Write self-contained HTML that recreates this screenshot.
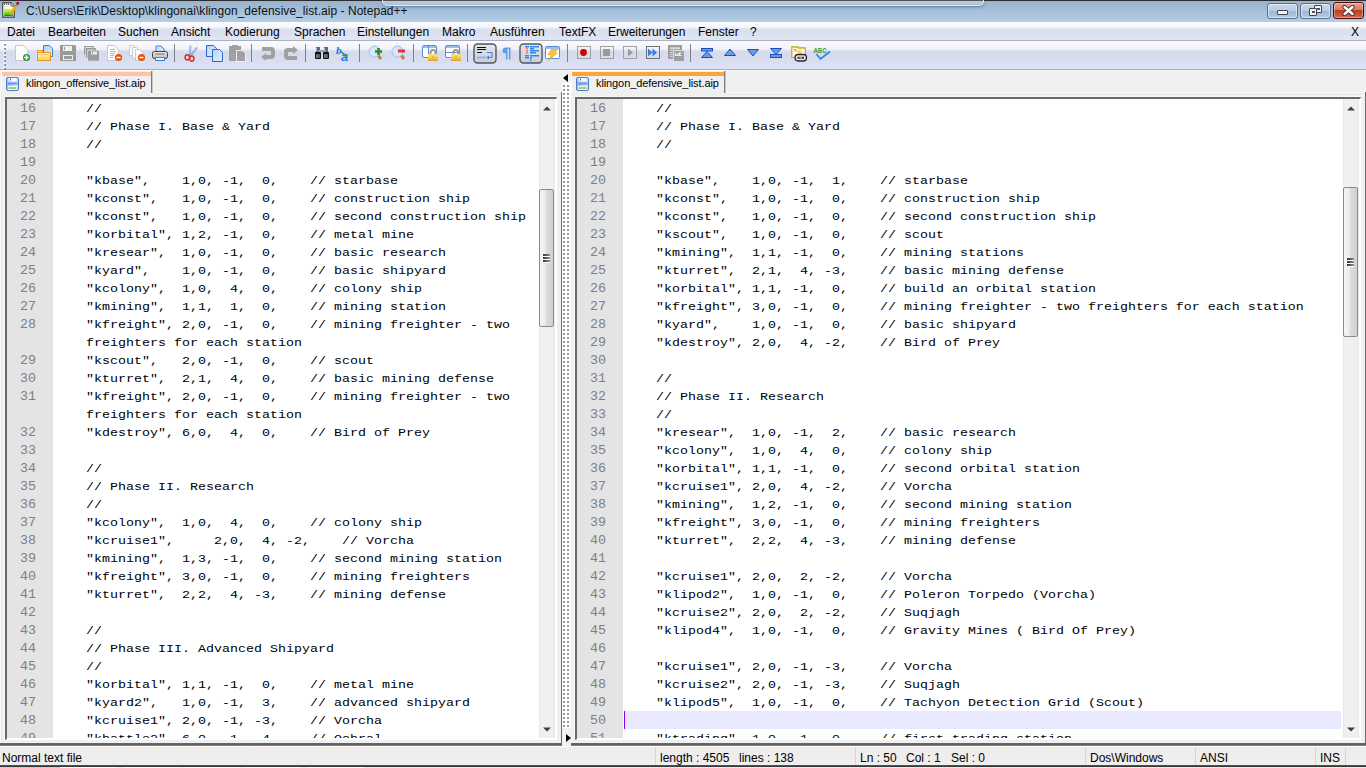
<!DOCTYPE html><html><head><meta charset="utf-8"><style>
*{margin:0;padding:0;box-sizing:border-box}
html,body{width:1366px;height:768px;overflow:hidden;background:#f0f0f0;position:relative;font-family:"Liberation Sans",sans-serif}
div,svg{position:absolute}
#title{left:0;top:0;width:1366px;height:22px;background:linear-gradient(#2c2c2c 0,#2c2c2c 1px,#98b2cf 1px,#b5cee7 22px)}
#ttext{left:26px;top:4px;font-size:12px;color:#111;white-space:nowrap;letter-spacing:0.04px}
#menu{left:0;top:22px;width:1366px;height:19px;background:linear-gradient(#fcfdfe 0,#f6f7fb 5px,#dde2f1 7px,#d9dff0 9px,#e1e6f4 100%);border-bottom:1px solid #a9afc0}
.mi{top:3px;font-size:12px;color:#000;white-space:nowrap}
#tool{left:0;top:41px;width:1366px;height:29px;background:linear-gradient(#fafbfd 0,#f1f3f9 8px,#d8ddef 10px,#d5daed 12px,#dde2f3 100%);border-bottom:1px solid #a8aebe}
.ln{width:46px;height:18px;font:13.333px/18px "Liberation Mono",monospace;color:#808080;padding-left:13px;white-space:pre;padding-top:1px;transform:scaleY(0.9);transform-origin:0 13px}
.cl{height:18px;font:13.333px/18px "Liberation Mono",monospace;color:#000;white-space:pre;padding-top:1px;transform:scaleY(0.88);transform-origin:0 13px}
.frame{border-top:2px solid #696969;border-left:2px solid #696969;border-right:1px solid #fff;border-bottom:1px solid #fff;background:#fff;box-shadow:-1px -1px 0 #f8f8f8}
.margin{background:#e4e4e4}
.sbar{background:linear-gradient(90deg,#e6e6e6 0,#f0f0f0 2px,#f0f0f0 14px,#e8e8e8 16px)}
.thumb{border:1px solid #8a8a8a;border-radius:2px;background:linear-gradient(90deg,#f4f4f4 0,#ececec 40%,#dcdcdf 50%,#cfd0d4 100%)}
.grip{width:8px;height:1px;background:#555}
#status{left:0;top:746px;width:1366px;height:19px;background:#f0eded;border-top:1px solid #fff}
.st{top:4px;font-size:12px;color:#000;white-space:nowrap}
.sep{top:1px;width:1px;height:18px;background:#d9d4d4}
.tab{font-size:11px;white-space:nowrap;letter-spacing:-0.1px}
</style></head><body>
<div id="title"></div>
<div style="left:382px;top:0;width:602px;height:6px;background:linear-gradient(#55524f 0,#55524f 1px,#b8cbe2 1px,#aec2da 5px);border:1px solid #dce7f3;border-top:none;border-radius:0 0 5px 5px;box-shadow:0 1px 3px rgba(50,70,100,.55)"></div>
<svg style="left:1px;top:1px" width="18" height="18" viewBox="0 0 18 18"><defs><linearGradient id="ag" x1="0" y1="0" x2="0" y2="1"><stop offset="0" stop-color="#e8ec60"/><stop offset=".35" stop-color="#b8e838"/><stop offset=".8" stop-color="#3cc020"/><stop offset="1" stop-color="#0a6a0a"/></linearGradient></defs><path d="M1.7 1.7H10L13.3 5V16.3H1.7Z" fill="#fff" stroke="#5a5a5a" stroke-width="1.4"/><path d="M10 1.7V5H13.3" fill="#e8e8e8" stroke="#5a5a5a" stroke-width="1"/><path d="M3.5 2.5v1.5M5.5 2.5v1.5M7.5 2.5v1.5" stroke="#5a5a5a" stroke-width="1"/><rect x="3.2" y="5.6" width="6" height=".6" fill="#c8d0d8"/><rect x="3.2" y="7.6" width="9" height="7.5" fill="url(#ag)"/><path d="M9.5 14L15 5" stroke="#f0a810" stroke-width="2.6"/><path d="M9 15L10 13.5" stroke="#806040" stroke-width="1"/><path d="M15 5L16.2 3" stroke="#5a7090" stroke-width="1"/><rect x="15.5" y="1" width="2.5" height="2.5" fill="#b00010"/></svg>
<div id="ttext">C:\Users\Erik\Desktop\klingonai\klingon_defensive_list.aip - Notepad++</div>
<div style="left:1267px;top:3px;width:31px;height:16px;border:1px solid #5d6f86;border-radius:3px;background:linear-gradient(#c8d8ea 0,#b9cce2 50%,#9fb6d0 50%,#b4cbe4 100%);box-shadow:inset 0 0 0 1px rgba(255,255,255,.5)"></div><div style="left:1277px;top:10px;width:11px;height:5px;border:1px solid #3c4552;border-radius:1px;background:#f4f4f4"></div><div style="left:1300px;top:3px;width:31px;height:16px;border:1px solid #5d6f86;border-radius:3px;background:linear-gradient(#c8d8ea 0,#b9cce2 50%,#9fb6d0 50%,#b4cbe4 100%);box-shadow:inset 0 0 0 1px rgba(255,255,255,.5)"></div><div style="left:1314px;top:5px;width:8px;height:8px;border:1px solid #3c4552;border-radius:1px;background:#f4f4f4"><div style="left:2px;top:2px;width:3px;height:2px;background:#4a5a70"></div></div><div style="left:1309px;top:8px;width:8px;height:8px;border:1px solid #3c4552;border-radius:1px;background:#f4f4f4"><div style="left:2px;top:2px;width:3px;height:2px;background:#4a5a70"></div></div><div style="left:1333px;top:2px;width:31px;height:17px;border:1px solid #4a1010;border-radius:3px;background:linear-gradient(#e8a090 0,#d87a64 45%,#c03a1c 50%,#d06a50 100%);box-shadow:inset 0 0 0 1px rgba(255,255,255,.35)"></div><svg style="left:1342px;top:5px" width="13" height="11" viewBox="0 0 13 11"><path d="M2.5 2L10.5 9M10.5 2L2.5 9" stroke="#3a2a2a" stroke-width="4.2" stroke-linecap="round"/><path d="M2.5 2L10.5 9M10.5 2L2.5 9" stroke="#fff" stroke-width="2.4" stroke-linecap="round"/></svg>
<div id="menu"><div class="mi" style="left:7px">Datei</div>
<div class="mi" style="left:48px">Bearbeiten</div>
<div class="mi" style="left:118px">Suchen</div>
<div class="mi" style="left:171px">Ansicht</div>
<div class="mi" style="left:225px">Kodierung</div>
<div class="mi" style="left:294px">Sprachen</div>
<div class="mi" style="left:357px">Einstellungen</div>
<div class="mi" style="left:442px">Makro</div>
<div class="mi" style="left:490px">Ausführen</div>
<div class="mi" style="left:559px">TextFX</div>
<div class="mi" style="left:608px">Erweiterungen</div>
<div class="mi" style="left:698px">Fenster</div>
<div class="mi" style="left:750px">?</div><div class="mi" style="left:1351px">X</div></div>
<div id="tool"></div>
<svg style="left:3px;top:43px" width="4" height="28" viewBox="0 0 4 28"><rect x="0.5" y="0" width="2" height="2" fill="#fff"/><rect x="1.5" y="1" width="1.5" height="1.5" fill="#6a707c"/><rect x="1" y="1.5" width="1" height="1" fill="#9aa0aa"/><rect x="0.5" y="4" width="2" height="2" fill="#fff"/><rect x="1.5" y="5" width="1.5" height="1.5" fill="#6a707c"/><rect x="1" y="5.5" width="1" height="1" fill="#9aa0aa"/><rect x="0.5" y="8" width="2" height="2" fill="#fff"/><rect x="1.5" y="9" width="1.5" height="1.5" fill="#6a707c"/><rect x="1" y="9.5" width="1" height="1" fill="#9aa0aa"/><rect x="0.5" y="12" width="2" height="2" fill="#fff"/><rect x="1.5" y="13" width="1.5" height="1.5" fill="#6a707c"/><rect x="1" y="13.5" width="1" height="1" fill="#9aa0aa"/><rect x="0.5" y="16" width="2" height="2" fill="#fff"/><rect x="1.5" y="17" width="1.5" height="1.5" fill="#6a707c"/><rect x="1" y="17.5" width="1" height="1" fill="#9aa0aa"/><rect x="0.5" y="20" width="2" height="2" fill="#fff"/><rect x="1.5" y="21" width="1.5" height="1.5" fill="#6a707c"/><rect x="1" y="21.5" width="1" height="1" fill="#9aa0aa"/><rect x="0.5" y="24" width="2" height="2" fill="#fff"/><rect x="1.5" y="25" width="1.5" height="1.5" fill="#6a707c"/><rect x="1" y="25.5" width="1" height="1" fill="#9aa0aa"/></svg>
<svg style="left:15px;top:45px" width="16" height="16" viewBox="0 0 16 16"><path d="M0.5 0.5H8.5L12.5 4.5V15.5H0.5Z" fill="#fdfdfd" stroke="#c9c9c9"/><circle cx="11.5" cy="12.5" r="3.5" fill="#2f8f2f"/><path d="M11.5 10.3v4.4M9.3 12.5h4.4" stroke="#fff" stroke-width="1.6"/></svg>
<svg style="left:37px;top:45px" width="17" height="17" viewBox="0 0 17 17"><defs><linearGradient id="fo" x1="0" y1="0" x2="0" y2="1"><stop offset="0" stop-color="#fdf3c8"/><stop offset="1" stop-color="#f6d455"/></linearGradient><linearGradient id="dc" x1="0" y1="0" x2="1" y2="1"><stop offset="0" stop-color="#a9cbf5"/><stop offset="1" stop-color="#eef5fe"/></linearGradient></defs><path d="M6.5 0.5H12.5L15.5 3.5V11.5H6.5Z" fill="url(#dc)" stroke="#3f7fd6"/><rect x=".5" y="5.5" width="5" height="2" fill="#fbe6a8" stroke="#e8951f"/><rect x=".5" y="7.5" width="13" height="8" fill="url(#fo)" stroke="#e8951f"/><path d="M2 9.5H12" stroke="#f0c040" stroke-width=".8"/></svg>
<svg style="left:60px;top:45px" width="16" height="16" viewBox="0 0 16 16"><path d="M0 0H15L16 1V16H0Z" fill="#9a9a9a"/><rect x="3" y="1" width="9" height="5" fill="#f0f0f0"/><rect x="4" y="2" width="1" height="3" fill="#9a9a9a"/><rect x="3" y="10" width="10" height="5" fill="#f0f0f0"/><rect x="4" y="11" width="8" height="3" fill="#9a9a9a"/></svg>
<svg style="left:84px;top:46px" width="15" height="15" viewBox="0 0 15 15"><rect x="0" y="0" width="10" height="9" fill="#9c9c9c"/><rect x="2" y="1" width="5" height="1.5" fill="#eee"/><rect x="2" y="2" width="10" height="10" fill="#9c9c9c"/><rect x="1.5" y="1.5" width="11" height="11" fill="none" stroke="#e4e7f2" stroke-width=".6"/><rect x="4" y="4" width="5" height="1.5" fill="#eee"/><rect x="4" y="4.5" width="11" height="10.5" fill="#9c9c9c"/><rect x="3.5" y="4" width="12" height="11" fill="none" stroke="#e4e7f2" stroke-width=".6"/><rect x="7" y="5.5" width="6" height="3" fill="#eee"/><rect x="8" y="6" width="1" height="2" fill="#9c9c9c"/></svg>
<svg style="left:107px;top:45px" width="16" height="17" viewBox="0 0 16 17"><path d="M0.5 0.5H7.5L11.5 4.5V15.5H0.5Z" fill="#fdfdfd" stroke="#c9c9c9"/><path d="M3 4.5h5M3 6.5h6M3 8.5h5M3 10.5h4M3 12.5h3" stroke="#9a9a9a" stroke-width=".7"/><circle cx="11.5" cy="12.5" r="3.6" fill="#e2560d"/><rect x="9.5" y="11.8" width="4" height="1.4" fill="#fff"/></svg>
<svg style="left:129px;top:45px" width="17" height="17" viewBox="0 0 17 17"><path d="M0.5 0.5H4.5L7.5 3.5V10.5H0.5Z" fill="#fdfdfd" stroke="#c9c9c9"/><path d="M3.5 2.5H7.5L10.5 5.5V13.5H3.5Z" fill="#fdfdfd" stroke="#c9c9c9"/><path d="M6.5 4.5H10.5L13.5 7.5V15.5H6.5Z" fill="#fdfdfd" stroke="#c9c9c9"/><circle cx="12.5" cy="12.5" r="3.6" fill="#e2560d"/><rect x="10.5" y="11.8" width="4" height="1.4" fill="#fff"/></svg>
<svg style="left:152px;top:45px" width="17" height="17" viewBox="0 0 17 17"><defs><linearGradient id="pr" x1="0" y1="0" x2="0" y2="1"><stop offset="0" stop-color="#f4f4f4"/><stop offset="1" stop-color="#b8b8b8"/></linearGradient></defs><path d="M4.0 1.0H9.0L12.0 4.0V8.0H4.0Z" fill="#cfe3fb" stroke="#3f7fd6"/><rect x=".5" y="6.5" width="15" height="7" rx="2" fill="url(#pr)" stroke="#3a3a3a"/><rect x="3" y="8" width="10" height="2" fill="#a8a8a8"/><rect x="3.5" y="12.5" width="9" height="3" fill="#eaf3ff" stroke="#3f7fd6"/></svg>
<svg style="left:184px;top:45px" width="15" height="17" viewBox="0 0 15 17"><path d="M6.5 0.5L6 11" stroke="#5a8ad0" stroke-width="1.6"/><path d="M6.5 0.5L6 11" stroke="#e8f0fa" stroke-width=".6"/><path d="M13 2.5L6.5 11" stroke="#5a8ad0" stroke-width="1.6"/><path d="M13 2.5L6.5 11" stroke="#e8f0fa" stroke-width=".6"/><ellipse cx="3.3" cy="12.3" rx="2.2" ry="2.6" fill="none" stroke="#d63028" stroke-width="1.5"/><ellipse cx="7.8" cy="13.6" rx="2.2" ry="2.6" fill="none" stroke="#d63028" stroke-width="1.5"/></svg>
<svg style="left:206px;top:45px" width="17" height="17" viewBox="0 0 17 17"><defs><linearGradient id="cp" x1="0" y1="0" x2="1" y2="1"><stop offset="0" stop-color="#b6d4f8"/><stop offset="1" stop-color="#e4f0fd"/></linearGradient></defs><path d="M.5 .5H7.5L10.5 3.5V11.5H.5Z" fill="url(#cp)" stroke="#2f66cc" stroke-linejoin="miter"/><path d="M6.5 4.5H13.5L16.5 7.5V16.5H6.5Z" fill="url(#cp)" stroke="#2f66cc" stroke-linejoin="miter"/></svg>
<svg style="left:229px;top:45px" width="17" height="17" viewBox="0 0 17 17"><rect x="0" y="1" width="12" height="15" fill="#a0a0a0"/><rect x="3" y="0" width="6" height="3" fill="#a0a0a0"/><path d="M7.5 5.5H13.5L16.5 8.5V16.5H7.5Z" fill="#a0a0a0" stroke="#f0f0f0"/></svg>
<svg style="left:260px;top:46px" width="16" height="16" viewBox="0 0 16 16"><path d="M2 3H11Q13 3 13 5V9Q13 11 11 11H5" fill="none" stroke="#a0a0a0" stroke-width="4"/><path d="M1 11L6 7V15Z" fill="#a0a0a0"/></svg>
<svg style="left:283px;top:46px" width="16" height="16" viewBox="0 0 16 16"><path d="M10 4H5Q3 4 3 6V10Q3 12 5 12H14" fill="none" stroke="#a0a0a0" stroke-width="4"/><path d="M15 4L10 0V8Z" fill="#a0a0a0"/></svg>
<svg style="left:315px;top:47px" width="14" height="12" viewBox="0 0 14 12"><rect x="1" y="0" width="4" height="6" fill="#5c6a7a"/><rect x="9" y="0" width="4" height="6" fill="#5c6a7a"/><rect x="3" y="3" width="8" height="2" fill="#8aa0b8"/><rect x="0" y="5" width="6" height="7" rx="1" fill="#111"/><rect x="8" y="5" width="6" height="7" rx="1" fill="#111"/><rect x="1.5" y="7" width="1" height="4" fill="#d0d8e0"/><rect x="3.5" y="7" width="1" height="4" fill="#a0a8b0"/><rect x="9.5" y="7" width="1" height="4" fill="#d0d8e0"/><rect x="11.5" y="7" width="1" height="4" fill="#a0a8b0"/><rect x="1" y="1" width="1" height="3" fill="#aab8c8"/><rect x="9" y="1" width="1" height="3" fill="#aab8c8"/></svg>
<svg style="left:336px;top:44px" width="18" height="18" viewBox="0 0 18 18"><text x="0" y="9.5" font-family="Liberation Serif" font-style="italic" font-weight="bold" font-size="11" fill="#2a6ee0">b</text><text x="5" y="16.5" font-family="Liberation Sans" font-style="italic" font-weight="bold" font-size="13" fill="#2a78e8">a</text><path d="M5 7.5L9.5 11.5" stroke="#2e9a3a" stroke-width="1.6"/><path d="M7.5 12.5L10.5 12.5L10.5 9.5Z" fill="#2e9a3a"/></svg>
<svg style="left:368px;top:45px" width="16" height="16" viewBox="0 0 16 16"><path d="M9 9L13 14" stroke="#b8864a" stroke-width="3"/><circle cx="6.5" cy="6.5" r="5.5" fill="#d8e8f8" stroke="#9ec0e8"/><path d="M10.5 3v7M7 6.5h7" stroke="#2e8a2e" stroke-width="2.6"/></svg>
<svg style="left:391px;top:45px" width="16" height="16" viewBox="0 0 16 16"><path d="M9 9L13 14" stroke="#b8864a" stroke-width="3"/><circle cx="6.5" cy="6.5" r="5.5" fill="#d8e8f8" stroke="#9ec0e8"/><rect x="7" y="4.5" width="7" height="3" fill="#e8323a"/></svg>
<svg style="left:422px;top:45px" width="17" height="17" viewBox="0 0 17 17"><defs><linearGradient id="lk" x1="0" y1="0" x2="0" y2="1"><stop offset="0" stop-color="#fbe38a"/><stop offset=".6" stop-color="#f3c650"/><stop offset="1" stop-color="#e39a28"/></linearGradient></defs><rect x=".5" y=".5" width="14" height="12" rx="1.5" fill="#fff" stroke="#5a8ad8"/><rect x="1" y="1" width="13" height="2" fill="#9cbcec"/><path d="M6.5 1V12.5" stroke="#5a8ad8"/><path d="M8.5 9V7.5Q8.5 5 11 5Q13.5 5 13.5 7.5V9" fill="none" stroke="#9a9a9a" stroke-width="2"/><rect x="6" y="9" width="10" height="7" fill="url(#lk)"/><rect x="10.5" y="11.5" width="1" height="1.2" fill="#b88a30"/></svg>
<svg style="left:445px;top:45px" width="17" height="17" viewBox="0 0 17 17"><rect x=".5" y=".5" width="14" height="12" rx="1.5" fill="#fff" stroke="#5a8ad8"/><rect x="1" y="1" width="13" height="2" fill="#9cbcec"/><path d="M1 7.5H14" stroke="#5a8ad8"/><path d="M8.5 9V7.5Q8.5 5 11 5Q13.5 5 13.5 7.5V9" fill="none" stroke="#9a9a9a" stroke-width="2"/><rect x="6" y="9" width="10" height="7" fill="url(#lk)"/><rect x="10.5" y="11.5" width="1" height="1.2" fill="#b88a30"/></svg>
<svg style="left:473px;top:43px" width="24" height="21" viewBox="0 0 24 21"><defs><linearGradient id="bg1" x1="0" y1="0" x2="0" y2="1"><stop offset="0" stop-color="#e4e6ec"/><stop offset="1" stop-color="#c9ccd6"/></linearGradient></defs><rect x="1" y="1" width="22" height="19" rx="3.5" fill="url(#bg1)" stroke="#54575c" stroke-width="1.4"/><path d="M4 4.5h9M4 6.5h9M4 9.5h5" stroke="#111" stroke-width="1"/><path d="M14 9.5h5V14.5h-3" fill="none" stroke="#3b82e0" stroke-width="1"/><path d="M16 12.5L13.5 14.5L16 16.5Z" fill="#3b82e0"/><rect x="4" y="13.5" width="9" height="2" fill="#8ab8f0"/></svg>
<svg style="left:502px;top:47px" width="9" height="13" viewBox="0 0 9 13"><path d="M4 0.5H8.5V12.5H7V2H5.5V12.5H4V6.5Q0.5 6.5 0.5 3.5Q0.5 0.5 4 0.5Z" fill="#5aa0ec"/></svg>
<svg style="left:519px;top:43px" width="24" height="21" viewBox="0 0 24 21"><rect x="1" y="1" width="22" height="19" rx="3.5" fill="url(#bg1)" stroke="#54575c" stroke-width="1.4"/><path d="M6 3.8h4M11 3.8h9M11 5.8h4M11 7.8h9M11 9.8h6M6 12.8h4M11 12.8h9M6 14.8h4M11 14.8h2" stroke="#2a8af0" stroke-width="1.5"/><path d="M8 5.3v1M8 7.3v1M8 9.3v1" stroke="#e00" stroke-width="1.2"/><rect x="11" y="16.5" width="1.5" height="1.5" fill="#2a8af0"/></svg>
<svg style="left:545px;top:46px" width="16" height="15" viewBox="0 0 16 15"><rect x=".5" y=".5" width="14" height="12" rx="1" fill="#fff" stroke="#5a8ad0"/><rect x="1" y="1" width="13" height="2" fill="#9dbdea"/><path d="M6 3.5L13 3.5L9.5 7L12.5 7L3.5 14.5L6.5 9L3 9Z" fill="#f2c440" stroke="#e0a020" stroke-width=".5"/></svg>
<svg style="left:577px;top:46px" width="14" height="13" viewBox="0 0 14 13"><rect x=".5" y=".5" width="13" height="12" fill="none" stroke="#a0a0a0"/><circle cx="6.5" cy="6.5" r="3.4" fill="#d00000"/></svg>
<svg style="left:600px;top:46px" width="14" height="13" viewBox="0 0 14 13"><rect x=".5" y=".5" width="13" height="12" fill="none" stroke="#a0a0a0"/><rect x="3" y="3" width="7" height="7" fill="#9a9a9a"/></svg>
<svg style="left:623px;top:46px" width="14" height="13" viewBox="0 0 14 13"><rect x=".5" y=".5" width="13" height="12" fill="none" stroke="#a0a0a0"/><path d="M5 2.5L10 6.5L5 10.5Z" fill="#9a9a9a"/></svg>
<svg style="left:646px;top:46px" width="14" height="13" viewBox="0 0 14 13"><rect x=".5" y=".5" width="13" height="12" fill="none" stroke="#707070"/><path d="M2 2.5L6.5 6.5L2 10.5ZM6.5 2.5L11 6.5L6.5 10.5Z" fill="#3d7de0"/></svg>
<svg style="left:668px;top:45px" width="17" height="17" viewBox="0 0 17 17"><rect x="0" y="0" width="14" height="14" fill="#9e9e9e"/><rect x="2" y="2.5" width="10" height="1.2" fill="#f4f4f4"/><rect x="2.5" y="4.8" width="1.2" height="1.2" fill="#eee"/><rect x="4.5" y="4.8" width="3" height="1.2" fill="#eee"/><rect x="8.5" y="4.8" width="3" height="1.2" fill="#eee"/><rect x="2.5" y="7" width="1.2" height="1.2" fill="#eee"/><rect x="4.5" y="7" width="1.2" height="1.2" fill="#eee"/><rect x="2.5" y="9" width="1.2" height="1.2" fill="#eee"/><rect x="4.5" y="9" width="1.2" height="1.2" fill="#eee"/><rect x="2.5" y="11" width="1.2" height="1.2" fill="#eee"/><rect x="4.5" y="11" width="1.2" height="1.2" fill="#eee"/><rect x="5.5" y="5.5" width="11" height="11" fill="#9e9e9e" stroke="#e4e7f2" stroke-width=".8"/><path d="M7.5 8V10.5H10V8M13.5 8H11.5V10.5H13.5" fill="none" stroke="#f4f4f4" stroke-width="1.2"/></svg>
<svg style="left:700px;top:47px" width="14" height="12" viewBox="0 0 14 12"><rect x="1.5" y="1.5" width="11" height="2.5" fill="#6a9ce6" stroke="#1a4fc4"/><path d="M1.5 10.5L7 4.5L12.5 10.5Z" fill="#6a9ce6" stroke="#1a4fc4" stroke-linejoin="round"/></svg>
<svg style="left:723px;top:48px" width="14" height="9" viewBox="0 0 14 9"><path d="M1.5 7.5L7 1L12.5 7.5Z" fill="#6a9ce6" stroke="#1a4fc4" stroke-linejoin="round"/></svg>
<svg style="left:746px;top:48px" width="14" height="9" viewBox="0 0 14 9"><path d="M1.5 1.5L7 8L12.5 1.5Z" fill="#6a9ce6" stroke="#1a4fc4" stroke-linejoin="round"/></svg>
<svg style="left:769px;top:47px" width="14" height="12" viewBox="0 0 14 12"><path d="M1.5 1.5L7 7.5L12.5 1.5Z" fill="#6a9ce6" stroke="#1a4fc4" stroke-linejoin="round"/><rect x="1.5" y="7.5" width="11" height="3" fill="#6a9ce6" stroke="#1a4fc4"/></svg>
<svg style="left:791px;top:46px" width="17" height="16" viewBox="0 0 17 16"><path d="M.8 .8H6.5L7.5 1.8H14.3V11.5H.8Z" fill="#fffbe8" stroke="#d8a020" stroke-width="1.2"/><path d="M.8 .8H6.5L7.5 1.8H14.3" fill="none" stroke="#b8c828" stroke-width="1.2"/><path d="M2.5 3.5h3M2.5 5h8M7 7h4" stroke="#f4a830" stroke-width="1"/><rect x="4" y="8.5" width="11.5" height="6.5" rx="3" fill="#e8e8e8" stroke="#2a2a2a" stroke-width="1.3"/><rect x="6.5" y="10.8" width="6.5" height="2" fill="#333"/><rect x="8.5" y="11.3" width="2.5" height="1" fill="#ddd"/></svg>
<svg style="left:813px;top:46px" width="18" height="15" viewBox="0 0 18 15"><text x="0.5" y="6.5" font-family="Liberation Sans" font-weight="bold" font-size="6.5" fill="#3a9a40" textLength="13" lengthAdjust="spacingAndGlyphs">ABC</text><path d="M3.5 8L7.5 13L17 5.5" fill="none" stroke="#2a8ae8" stroke-width="1.8"/></svg>
<div style="left:174px;top:44px;width:1px;height:18px;background:#7a7f8c"></div>
<div style="left:251px;top:44px;width:1px;height:18px;background:#7a7f8c"></div>
<div style="left:305px;top:44px;width:1px;height:18px;background:#7a7f8c"></div>
<div style="left:359px;top:44px;width:1px;height:18px;background:#7a7f8c"></div>
<div style="left:413px;top:44px;width:1px;height:18px;background:#7a7f8c"></div>
<div style="left:467px;top:44px;width:1px;height:18px;background:#7a7f8c"></div>
<div style="left:567px;top:44px;width:1px;height:18px;background:#7a7f8c"></div>
<div style="left:690px;top:44px;width:1px;height:18px;background:#7a7f8c"></div>
<div style="left:0;top:70px;width:1366px;height:1px;background:#f5f5f3"></div>
<div style="left:1px;top:70px;width:151px;height:23px;background:#f0f0f0;border-top:1px solid #fff;border-left:1px solid #fff"></div><div style="left:2px;top:72px;width:149px;height:4px;background:#fdc4a4"></div><div style="left:151px;top:71px;width:2px;height:22px;background:linear-gradient(90deg,#7c7c7c 0,#7c7c7c 1px,#c8c8c8 1px)"></div><svg style="left:6px;top:77px" width="13" height="14" viewBox="0 0 13 14"><defs><linearGradient id="fg" x1="0" y1="0" x2="1" y2="0"><stop offset="0" stop-color="#9cc0ee"/><stop offset="1" stop-color="#cfe0f8"/></linearGradient></defs><rect x=".5" y=".5" width="12" height="13" rx="1.5" fill="url(#fg)" stroke="#4a7ccc"/><rect x="2.5" y="1" width="8" height="3.5" fill="#f8fbff"/><rect x="4" y="1.5" width="1" height="2" fill="#3060b0"/><rect x="1.5" y="5.5" width="10" height="2" fill="#6a9ae0"/><rect x="2" y="9" width="9" height="4" fill="#f4f8fc"/><rect x="2.5" y="10" width="8" height="2" fill="#9ad078"/></svg><div class="tab" style="left:26px;top:77px">klingon_offensive_list.aip</div><div style="left:571px;top:70px;width:154px;height:23px;background:#f0f0f0;border-top:1px solid #fff;border-left:1px solid #fff"></div><div style="left:572px;top:72px;width:152px;height:4px;background:#faa53a"></div><div style="left:724px;top:71px;width:2px;height:22px;background:linear-gradient(90deg,#7c7c7c 0,#7c7c7c 1px,#c8c8c8 1px)"></div><svg style="left:576px;top:77px" width="13" height="14" viewBox="0 0 13 14"><defs><linearGradient id="fg" x1="0" y1="0" x2="1" y2="0"><stop offset="0" stop-color="#9cc0ee"/><stop offset="1" stop-color="#cfe0f8"/></linearGradient></defs><rect x=".5" y=".5" width="12" height="13" rx="1.5" fill="url(#fg)" stroke="#4a7ccc"/><rect x="2.5" y="1" width="8" height="3.5" fill="#f8fbff"/><rect x="4" y="1.5" width="1" height="2" fill="#3060b0"/><rect x="1.5" y="5.5" width="10" height="2" fill="#6a9ae0"/><rect x="2" y="9" width="9" height="4" fill="#f4f8fc"/><rect x="2.5" y="10" width="8" height="2" fill="#9ad078"/></svg><div class="tab" style="left:596px;top:77px">klingon_defensive_list.aip</div>
<div style="left:557px;top:92px;width:4px;height:653px;background:#f0f0f0"></div><div style="left:561px;top:92px;width:1px;height:653px;background:#6a6a6a"></div><div style="left:562px;top:83px;width:9px;height:645px;background:#fff"></div><div style="left:563px;top:85px;width:2px;height:2px;background:#999"></div><div style="left:567px;top:85px;width:2px;height:2px;background:#999"></div><div style="left:563px;top:89px;width:2px;height:2px;background:#999"></div><div style="left:567px;top:89px;width:2px;height:2px;background:#999"></div><div style="left:563px;top:93px;width:2px;height:2px;background:#999"></div><div style="left:567px;top:93px;width:2px;height:2px;background:#999"></div><div style="left:563px;top:97px;width:2px;height:2px;background:#999"></div><div style="left:567px;top:97px;width:2px;height:2px;background:#999"></div><div style="left:563px;top:101px;width:2px;height:2px;background:#999"></div><div style="left:567px;top:101px;width:2px;height:2px;background:#999"></div><div style="left:563px;top:105px;width:2px;height:2px;background:#999"></div><div style="left:567px;top:105px;width:2px;height:2px;background:#999"></div><div style="left:563px;top:109px;width:2px;height:2px;background:#999"></div><div style="left:567px;top:109px;width:2px;height:2px;background:#999"></div><div style="left:563px;top:113px;width:2px;height:2px;background:#999"></div><div style="left:567px;top:113px;width:2px;height:2px;background:#999"></div><div style="left:563px;top:117px;width:2px;height:2px;background:#999"></div><div style="left:567px;top:117px;width:2px;height:2px;background:#999"></div><div style="left:563px;top:121px;width:2px;height:2px;background:#999"></div><div style="left:567px;top:121px;width:2px;height:2px;background:#999"></div><div style="left:563px;top:125px;width:2px;height:2px;background:#999"></div><div style="left:567px;top:125px;width:2px;height:2px;background:#999"></div><div style="left:563px;top:129px;width:2px;height:2px;background:#999"></div><div style="left:567px;top:129px;width:2px;height:2px;background:#999"></div><div style="left:563px;top:133px;width:2px;height:2px;background:#999"></div><div style="left:567px;top:133px;width:2px;height:2px;background:#999"></div><div style="left:563px;top:137px;width:2px;height:2px;background:#999"></div><div style="left:567px;top:137px;width:2px;height:2px;background:#999"></div><div style="left:563px;top:141px;width:2px;height:2px;background:#999"></div><div style="left:567px;top:141px;width:2px;height:2px;background:#999"></div><div style="left:563px;top:145px;width:2px;height:2px;background:#999"></div><div style="left:567px;top:145px;width:2px;height:2px;background:#999"></div><div style="left:563px;top:149px;width:2px;height:2px;background:#999"></div><div style="left:567px;top:149px;width:2px;height:2px;background:#999"></div><div style="left:563px;top:153px;width:2px;height:2px;background:#999"></div><div style="left:567px;top:153px;width:2px;height:2px;background:#999"></div><div style="left:563px;top:157px;width:2px;height:2px;background:#999"></div><div style="left:567px;top:157px;width:2px;height:2px;background:#999"></div><div style="left:563px;top:161px;width:2px;height:2px;background:#999"></div><div style="left:567px;top:161px;width:2px;height:2px;background:#999"></div><div style="left:563px;top:165px;width:2px;height:2px;background:#999"></div><div style="left:567px;top:165px;width:2px;height:2px;background:#999"></div><div style="left:563px;top:169px;width:2px;height:2px;background:#999"></div><div style="left:567px;top:169px;width:2px;height:2px;background:#999"></div><div style="left:563px;top:173px;width:2px;height:2px;background:#999"></div><div style="left:567px;top:173px;width:2px;height:2px;background:#999"></div><div style="left:563px;top:177px;width:2px;height:2px;background:#999"></div><div style="left:567px;top:177px;width:2px;height:2px;background:#999"></div><div style="left:563px;top:181px;width:2px;height:2px;background:#999"></div><div style="left:567px;top:181px;width:2px;height:2px;background:#999"></div><div style="left:563px;top:185px;width:2px;height:2px;background:#999"></div><div style="left:567px;top:185px;width:2px;height:2px;background:#999"></div><div style="left:563px;top:189px;width:2px;height:2px;background:#999"></div><div style="left:567px;top:189px;width:2px;height:2px;background:#999"></div><div style="left:563px;top:193px;width:2px;height:2px;background:#999"></div><div style="left:567px;top:193px;width:2px;height:2px;background:#999"></div><div style="left:563px;top:197px;width:2px;height:2px;background:#999"></div><div style="left:567px;top:197px;width:2px;height:2px;background:#999"></div><div style="left:563px;top:201px;width:2px;height:2px;background:#999"></div><div style="left:567px;top:201px;width:2px;height:2px;background:#999"></div><div style="left:563px;top:205px;width:2px;height:2px;background:#999"></div><div style="left:567px;top:205px;width:2px;height:2px;background:#999"></div><div style="left:563px;top:209px;width:2px;height:2px;background:#999"></div><div style="left:567px;top:209px;width:2px;height:2px;background:#999"></div><div style="left:563px;top:213px;width:2px;height:2px;background:#999"></div><div style="left:567px;top:213px;width:2px;height:2px;background:#999"></div><div style="left:563px;top:217px;width:2px;height:2px;background:#999"></div><div style="left:567px;top:217px;width:2px;height:2px;background:#999"></div><div style="left:563px;top:221px;width:2px;height:2px;background:#999"></div><div style="left:567px;top:221px;width:2px;height:2px;background:#999"></div><div style="left:563px;top:225px;width:2px;height:2px;background:#999"></div><div style="left:567px;top:225px;width:2px;height:2px;background:#999"></div><div style="left:563px;top:229px;width:2px;height:2px;background:#999"></div><div style="left:567px;top:229px;width:2px;height:2px;background:#999"></div><div style="left:563px;top:233px;width:2px;height:2px;background:#999"></div><div style="left:567px;top:233px;width:2px;height:2px;background:#999"></div><div style="left:563px;top:237px;width:2px;height:2px;background:#999"></div><div style="left:567px;top:237px;width:2px;height:2px;background:#999"></div><div style="left:563px;top:241px;width:2px;height:2px;background:#999"></div><div style="left:567px;top:241px;width:2px;height:2px;background:#999"></div><div style="left:563px;top:245px;width:2px;height:2px;background:#999"></div><div style="left:567px;top:245px;width:2px;height:2px;background:#999"></div><div style="left:563px;top:249px;width:2px;height:2px;background:#999"></div><div style="left:567px;top:249px;width:2px;height:2px;background:#999"></div><div style="left:563px;top:253px;width:2px;height:2px;background:#999"></div><div style="left:567px;top:253px;width:2px;height:2px;background:#999"></div><div style="left:563px;top:257px;width:2px;height:2px;background:#999"></div><div style="left:567px;top:257px;width:2px;height:2px;background:#999"></div><div style="left:563px;top:261px;width:2px;height:2px;background:#999"></div><div style="left:567px;top:261px;width:2px;height:2px;background:#999"></div><div style="left:563px;top:265px;width:2px;height:2px;background:#999"></div><div style="left:567px;top:265px;width:2px;height:2px;background:#999"></div><div style="left:563px;top:269px;width:2px;height:2px;background:#999"></div><div style="left:567px;top:269px;width:2px;height:2px;background:#999"></div><div style="left:563px;top:273px;width:2px;height:2px;background:#999"></div><div style="left:567px;top:273px;width:2px;height:2px;background:#999"></div><div style="left:563px;top:277px;width:2px;height:2px;background:#999"></div><div style="left:567px;top:277px;width:2px;height:2px;background:#999"></div><div style="left:563px;top:281px;width:2px;height:2px;background:#999"></div><div style="left:567px;top:281px;width:2px;height:2px;background:#999"></div><div style="left:563px;top:285px;width:2px;height:2px;background:#999"></div><div style="left:567px;top:285px;width:2px;height:2px;background:#999"></div><div style="left:563px;top:289px;width:2px;height:2px;background:#999"></div><div style="left:567px;top:289px;width:2px;height:2px;background:#999"></div><div style="left:563px;top:293px;width:2px;height:2px;background:#999"></div><div style="left:567px;top:293px;width:2px;height:2px;background:#999"></div><div style="left:563px;top:297px;width:2px;height:2px;background:#999"></div><div style="left:567px;top:297px;width:2px;height:2px;background:#999"></div><div style="left:563px;top:301px;width:2px;height:2px;background:#999"></div><div style="left:567px;top:301px;width:2px;height:2px;background:#999"></div><div style="left:563px;top:305px;width:2px;height:2px;background:#999"></div><div style="left:567px;top:305px;width:2px;height:2px;background:#999"></div><div style="left:563px;top:309px;width:2px;height:2px;background:#999"></div><div style="left:567px;top:309px;width:2px;height:2px;background:#999"></div><div style="left:563px;top:313px;width:2px;height:2px;background:#999"></div><div style="left:567px;top:313px;width:2px;height:2px;background:#999"></div><div style="left:563px;top:317px;width:2px;height:2px;background:#999"></div><div style="left:567px;top:317px;width:2px;height:2px;background:#999"></div><div style="left:563px;top:321px;width:2px;height:2px;background:#999"></div><div style="left:567px;top:321px;width:2px;height:2px;background:#999"></div><div style="left:563px;top:325px;width:2px;height:2px;background:#999"></div><div style="left:567px;top:325px;width:2px;height:2px;background:#999"></div><div style="left:563px;top:329px;width:2px;height:2px;background:#999"></div><div style="left:567px;top:329px;width:2px;height:2px;background:#999"></div><div style="left:563px;top:333px;width:2px;height:2px;background:#999"></div><div style="left:567px;top:333px;width:2px;height:2px;background:#999"></div><div style="left:563px;top:337px;width:2px;height:2px;background:#999"></div><div style="left:567px;top:337px;width:2px;height:2px;background:#999"></div><div style="left:563px;top:341px;width:2px;height:2px;background:#999"></div><div style="left:567px;top:341px;width:2px;height:2px;background:#999"></div><div style="left:563px;top:345px;width:2px;height:2px;background:#999"></div><div style="left:567px;top:345px;width:2px;height:2px;background:#999"></div><div style="left:563px;top:349px;width:2px;height:2px;background:#999"></div><div style="left:567px;top:349px;width:2px;height:2px;background:#999"></div><div style="left:563px;top:353px;width:2px;height:2px;background:#999"></div><div style="left:567px;top:353px;width:2px;height:2px;background:#999"></div><div style="left:563px;top:357px;width:2px;height:2px;background:#999"></div><div style="left:567px;top:357px;width:2px;height:2px;background:#999"></div><div style="left:563px;top:361px;width:2px;height:2px;background:#999"></div><div style="left:567px;top:361px;width:2px;height:2px;background:#999"></div><div style="left:563px;top:365px;width:2px;height:2px;background:#999"></div><div style="left:567px;top:365px;width:2px;height:2px;background:#999"></div><div style="left:563px;top:369px;width:2px;height:2px;background:#999"></div><div style="left:567px;top:369px;width:2px;height:2px;background:#999"></div><div style="left:563px;top:373px;width:2px;height:2px;background:#999"></div><div style="left:567px;top:373px;width:2px;height:2px;background:#999"></div><div style="left:563px;top:377px;width:2px;height:2px;background:#999"></div><div style="left:567px;top:377px;width:2px;height:2px;background:#999"></div><div style="left:563px;top:381px;width:2px;height:2px;background:#999"></div><div style="left:567px;top:381px;width:2px;height:2px;background:#999"></div><div style="left:563px;top:385px;width:2px;height:2px;background:#999"></div><div style="left:567px;top:385px;width:2px;height:2px;background:#999"></div><div style="left:563px;top:389px;width:2px;height:2px;background:#999"></div><div style="left:567px;top:389px;width:2px;height:2px;background:#999"></div><div style="left:563px;top:393px;width:2px;height:2px;background:#999"></div><div style="left:567px;top:393px;width:2px;height:2px;background:#999"></div><div style="left:563px;top:397px;width:2px;height:2px;background:#999"></div><div style="left:567px;top:397px;width:2px;height:2px;background:#999"></div><div style="left:563px;top:401px;width:2px;height:2px;background:#999"></div><div style="left:567px;top:401px;width:2px;height:2px;background:#999"></div><div style="left:563px;top:405px;width:2px;height:2px;background:#999"></div><div style="left:567px;top:405px;width:2px;height:2px;background:#999"></div><div style="left:563px;top:409px;width:2px;height:2px;background:#999"></div><div style="left:567px;top:409px;width:2px;height:2px;background:#999"></div><div style="left:563px;top:413px;width:2px;height:2px;background:#999"></div><div style="left:567px;top:413px;width:2px;height:2px;background:#999"></div><div style="left:563px;top:417px;width:2px;height:2px;background:#999"></div><div style="left:567px;top:417px;width:2px;height:2px;background:#999"></div><div style="left:563px;top:421px;width:2px;height:2px;background:#999"></div><div style="left:567px;top:421px;width:2px;height:2px;background:#999"></div><div style="left:563px;top:425px;width:2px;height:2px;background:#999"></div><div style="left:567px;top:425px;width:2px;height:2px;background:#999"></div><div style="left:563px;top:429px;width:2px;height:2px;background:#999"></div><div style="left:567px;top:429px;width:2px;height:2px;background:#999"></div><div style="left:563px;top:433px;width:2px;height:2px;background:#999"></div><div style="left:567px;top:433px;width:2px;height:2px;background:#999"></div><div style="left:563px;top:437px;width:2px;height:2px;background:#999"></div><div style="left:567px;top:437px;width:2px;height:2px;background:#999"></div><div style="left:563px;top:441px;width:2px;height:2px;background:#999"></div><div style="left:567px;top:441px;width:2px;height:2px;background:#999"></div><div style="left:563px;top:445px;width:2px;height:2px;background:#999"></div><div style="left:567px;top:445px;width:2px;height:2px;background:#999"></div><div style="left:563px;top:449px;width:2px;height:2px;background:#999"></div><div style="left:567px;top:449px;width:2px;height:2px;background:#999"></div><div style="left:563px;top:453px;width:2px;height:2px;background:#999"></div><div style="left:567px;top:453px;width:2px;height:2px;background:#999"></div><div style="left:563px;top:457px;width:2px;height:2px;background:#999"></div><div style="left:567px;top:457px;width:2px;height:2px;background:#999"></div><div style="left:563px;top:461px;width:2px;height:2px;background:#999"></div><div style="left:567px;top:461px;width:2px;height:2px;background:#999"></div><div style="left:563px;top:465px;width:2px;height:2px;background:#999"></div><div style="left:567px;top:465px;width:2px;height:2px;background:#999"></div><div style="left:563px;top:469px;width:2px;height:2px;background:#999"></div><div style="left:567px;top:469px;width:2px;height:2px;background:#999"></div><div style="left:563px;top:473px;width:2px;height:2px;background:#999"></div><div style="left:567px;top:473px;width:2px;height:2px;background:#999"></div><div style="left:563px;top:477px;width:2px;height:2px;background:#999"></div><div style="left:567px;top:477px;width:2px;height:2px;background:#999"></div><div style="left:563px;top:481px;width:2px;height:2px;background:#999"></div><div style="left:567px;top:481px;width:2px;height:2px;background:#999"></div><div style="left:563px;top:485px;width:2px;height:2px;background:#999"></div><div style="left:567px;top:485px;width:2px;height:2px;background:#999"></div><div style="left:563px;top:489px;width:2px;height:2px;background:#999"></div><div style="left:567px;top:489px;width:2px;height:2px;background:#999"></div><div style="left:563px;top:493px;width:2px;height:2px;background:#999"></div><div style="left:567px;top:493px;width:2px;height:2px;background:#999"></div><div style="left:563px;top:497px;width:2px;height:2px;background:#999"></div><div style="left:567px;top:497px;width:2px;height:2px;background:#999"></div><div style="left:563px;top:501px;width:2px;height:2px;background:#999"></div><div style="left:567px;top:501px;width:2px;height:2px;background:#999"></div><div style="left:563px;top:505px;width:2px;height:2px;background:#999"></div><div style="left:567px;top:505px;width:2px;height:2px;background:#999"></div><div style="left:563px;top:509px;width:2px;height:2px;background:#999"></div><div style="left:567px;top:509px;width:2px;height:2px;background:#999"></div><div style="left:563px;top:513px;width:2px;height:2px;background:#999"></div><div style="left:567px;top:513px;width:2px;height:2px;background:#999"></div><div style="left:563px;top:517px;width:2px;height:2px;background:#999"></div><div style="left:567px;top:517px;width:2px;height:2px;background:#999"></div><div style="left:563px;top:521px;width:2px;height:2px;background:#999"></div><div style="left:567px;top:521px;width:2px;height:2px;background:#999"></div><div style="left:563px;top:525px;width:2px;height:2px;background:#999"></div><div style="left:567px;top:525px;width:2px;height:2px;background:#999"></div><div style="left:563px;top:529px;width:2px;height:2px;background:#999"></div><div style="left:567px;top:529px;width:2px;height:2px;background:#999"></div><div style="left:563px;top:533px;width:2px;height:2px;background:#999"></div><div style="left:567px;top:533px;width:2px;height:2px;background:#999"></div><div style="left:563px;top:537px;width:2px;height:2px;background:#999"></div><div style="left:567px;top:537px;width:2px;height:2px;background:#999"></div><div style="left:563px;top:541px;width:2px;height:2px;background:#999"></div><div style="left:567px;top:541px;width:2px;height:2px;background:#999"></div><div style="left:563px;top:545px;width:2px;height:2px;background:#999"></div><div style="left:567px;top:545px;width:2px;height:2px;background:#999"></div><div style="left:563px;top:549px;width:2px;height:2px;background:#999"></div><div style="left:567px;top:549px;width:2px;height:2px;background:#999"></div><div style="left:563px;top:553px;width:2px;height:2px;background:#999"></div><div style="left:567px;top:553px;width:2px;height:2px;background:#999"></div><div style="left:563px;top:557px;width:2px;height:2px;background:#999"></div><div style="left:567px;top:557px;width:2px;height:2px;background:#999"></div><div style="left:563px;top:561px;width:2px;height:2px;background:#999"></div><div style="left:567px;top:561px;width:2px;height:2px;background:#999"></div><div style="left:563px;top:565px;width:2px;height:2px;background:#999"></div><div style="left:567px;top:565px;width:2px;height:2px;background:#999"></div><div style="left:563px;top:569px;width:2px;height:2px;background:#999"></div><div style="left:567px;top:569px;width:2px;height:2px;background:#999"></div><div style="left:563px;top:573px;width:2px;height:2px;background:#999"></div><div style="left:567px;top:573px;width:2px;height:2px;background:#999"></div><div style="left:563px;top:577px;width:2px;height:2px;background:#999"></div><div style="left:567px;top:577px;width:2px;height:2px;background:#999"></div><div style="left:563px;top:581px;width:2px;height:2px;background:#999"></div><div style="left:567px;top:581px;width:2px;height:2px;background:#999"></div><div style="left:563px;top:585px;width:2px;height:2px;background:#999"></div><div style="left:567px;top:585px;width:2px;height:2px;background:#999"></div><div style="left:563px;top:589px;width:2px;height:2px;background:#999"></div><div style="left:567px;top:589px;width:2px;height:2px;background:#999"></div><div style="left:563px;top:593px;width:2px;height:2px;background:#999"></div><div style="left:567px;top:593px;width:2px;height:2px;background:#999"></div><div style="left:563px;top:597px;width:2px;height:2px;background:#999"></div><div style="left:567px;top:597px;width:2px;height:2px;background:#999"></div><div style="left:563px;top:601px;width:2px;height:2px;background:#999"></div><div style="left:567px;top:601px;width:2px;height:2px;background:#999"></div><div style="left:563px;top:605px;width:2px;height:2px;background:#999"></div><div style="left:567px;top:605px;width:2px;height:2px;background:#999"></div><div style="left:563px;top:609px;width:2px;height:2px;background:#999"></div><div style="left:567px;top:609px;width:2px;height:2px;background:#999"></div><div style="left:563px;top:613px;width:2px;height:2px;background:#999"></div><div style="left:567px;top:613px;width:2px;height:2px;background:#999"></div><div style="left:563px;top:617px;width:2px;height:2px;background:#999"></div><div style="left:567px;top:617px;width:2px;height:2px;background:#999"></div><div style="left:563px;top:621px;width:2px;height:2px;background:#999"></div><div style="left:567px;top:621px;width:2px;height:2px;background:#999"></div><div style="left:563px;top:625px;width:2px;height:2px;background:#999"></div><div style="left:567px;top:625px;width:2px;height:2px;background:#999"></div><div style="left:563px;top:629px;width:2px;height:2px;background:#999"></div><div style="left:567px;top:629px;width:2px;height:2px;background:#999"></div><div style="left:563px;top:633px;width:2px;height:2px;background:#999"></div><div style="left:567px;top:633px;width:2px;height:2px;background:#999"></div><div style="left:563px;top:637px;width:2px;height:2px;background:#999"></div><div style="left:567px;top:637px;width:2px;height:2px;background:#999"></div><div style="left:563px;top:641px;width:2px;height:2px;background:#999"></div><div style="left:567px;top:641px;width:2px;height:2px;background:#999"></div><div style="left:563px;top:645px;width:2px;height:2px;background:#999"></div><div style="left:567px;top:645px;width:2px;height:2px;background:#999"></div><div style="left:563px;top:649px;width:2px;height:2px;background:#999"></div><div style="left:567px;top:649px;width:2px;height:2px;background:#999"></div><div style="left:563px;top:653px;width:2px;height:2px;background:#999"></div><div style="left:567px;top:653px;width:2px;height:2px;background:#999"></div><div style="left:563px;top:657px;width:2px;height:2px;background:#999"></div><div style="left:567px;top:657px;width:2px;height:2px;background:#999"></div><div style="left:563px;top:661px;width:2px;height:2px;background:#999"></div><div style="left:567px;top:661px;width:2px;height:2px;background:#999"></div><div style="left:563px;top:665px;width:2px;height:2px;background:#999"></div><div style="left:567px;top:665px;width:2px;height:2px;background:#999"></div><div style="left:563px;top:669px;width:2px;height:2px;background:#999"></div><div style="left:567px;top:669px;width:2px;height:2px;background:#999"></div><div style="left:563px;top:673px;width:2px;height:2px;background:#999"></div><div style="left:567px;top:673px;width:2px;height:2px;background:#999"></div><div style="left:563px;top:677px;width:2px;height:2px;background:#999"></div><div style="left:567px;top:677px;width:2px;height:2px;background:#999"></div><div style="left:563px;top:681px;width:2px;height:2px;background:#999"></div><div style="left:567px;top:681px;width:2px;height:2px;background:#999"></div><div style="left:563px;top:685px;width:2px;height:2px;background:#999"></div><div style="left:567px;top:685px;width:2px;height:2px;background:#999"></div><div style="left:563px;top:689px;width:2px;height:2px;background:#999"></div><div style="left:567px;top:689px;width:2px;height:2px;background:#999"></div><div style="left:563px;top:693px;width:2px;height:2px;background:#999"></div><div style="left:567px;top:693px;width:2px;height:2px;background:#999"></div><div style="left:563px;top:697px;width:2px;height:2px;background:#999"></div><div style="left:567px;top:697px;width:2px;height:2px;background:#999"></div><div style="left:563px;top:701px;width:2px;height:2px;background:#999"></div><div style="left:567px;top:701px;width:2px;height:2px;background:#999"></div><div style="left:563px;top:705px;width:2px;height:2px;background:#999"></div><div style="left:567px;top:705px;width:2px;height:2px;background:#999"></div><div style="left:563px;top:709px;width:2px;height:2px;background:#999"></div><div style="left:567px;top:709px;width:2px;height:2px;background:#999"></div><div style="left:563px;top:713px;width:2px;height:2px;background:#999"></div><div style="left:567px;top:713px;width:2px;height:2px;background:#999"></div><div style="left:563px;top:717px;width:2px;height:2px;background:#999"></div><div style="left:567px;top:717px;width:2px;height:2px;background:#999"></div><div style="left:563px;top:721px;width:2px;height:2px;background:#999"></div><div style="left:567px;top:721px;width:2px;height:2px;background:#999"></div><div style="left:563px;top:725px;width:2px;height:2px;background:#999"></div><div style="left:567px;top:725px;width:2px;height:2px;background:#999"></div><svg style="left:563px;top:74px" width="5" height="8" viewBox="0 0 5 8"><path d="M5 0V8L0 4Z" fill="#000"/></svg><div style="left:1365px;top:92px;width:1px;height:651px;background:#6a6a6a"></div><div style="left:153px;top:92px;width:404px;height:1px;background:#fff"></div><div style="left:153px;top:93px;width:404px;height:1px;background:#e6e6e6"></div><div style="left:726px;top:92px;width:639px;height:1px;background:#fff"></div><div style="left:726px;top:93px;width:639px;height:1px;background:#e6e6e6"></div>
<div class="frame" style="left:5px;top:97px;width:552px;height:643px"></div>
<div class="margin" style="left:7px;top:99px;width:46px;height:639px"></div>
<div class="sbar" style="left:539px;top:99px;width:16px;height:639px"></div><svg style="left:543px;top:106px" width="8" height="5" viewBox="0 0 8 5"><path d="M0 4.5L4 0.5L8 4.5Z" fill="#404040"/></svg><svg style="left:543px;top:727px" width="8" height="5" viewBox="0 0 8 5"><path d="M0 0.5L4 4.5L8 0.5Z" fill="#404040"/></svg><div class="thumb" style="left:539px;top:189px;width:15px;height:138px"></div><div class="grip" style="left:543px;top:254px;width:7px;height:2px;background:linear-gradient(90deg,#303030,#909090);box-shadow:0 1px 0 #fff,-1px 0 0 #fff"></div><div class="grip" style="left:543px;top:257px;width:7px;height:2px;background:linear-gradient(90deg,#303030,#909090);box-shadow:0 1px 0 #fff,-1px 0 0 #fff"></div><div class="grip" style="left:543px;top:260px;width:7px;height:2px;background:linear-gradient(90deg,#303030,#909090);box-shadow:0 1px 0 #fff,-1px 0 0 #fff"></div>
<div class="frame" style="left:575px;top:97px;width:786px;height:643px"></div>
<div class="margin" style="left:577px;top:99px;width:46px;height:639px"></div>
<div style="left:625px;top:711px;width:716px;height:18px;background:#e8e8ff"></div>
<div style="left:624px;top:711px;width:1px;height:18px;background:#8000ff"></div>
<div class="sbar" style="left:1343px;top:99px;width:16px;height:639px"></div><svg style="left:1347px;top:106px" width="8" height="5" viewBox="0 0 8 5"><path d="M0 4.5L4 0.5L8 4.5Z" fill="#404040"/></svg><svg style="left:1347px;top:727px" width="8" height="5" viewBox="0 0 8 5"><path d="M0 0.5L4 4.5L8 0.5Z" fill="#404040"/></svg><div class="thumb" style="left:1343px;top:187px;width:15px;height:150px"></div><div class="grip" style="left:1347px;top:258px;width:7px;height:2px;background:linear-gradient(90deg,#303030,#909090);box-shadow:0 1px 0 #fff,-1px 0 0 #fff"></div><div class="grip" style="left:1347px;top:261px;width:7px;height:2px;background:linear-gradient(90deg,#303030,#909090);box-shadow:0 1px 0 #fff,-1px 0 0 #fff"></div><div class="grip" style="left:1347px;top:264px;width:7px;height:2px;background:linear-gradient(90deg,#303030,#909090);box-shadow:0 1px 0 #fff,-1px 0 0 #fff"></div>
<div id="lcode" style="left:0;top:0;width:539px;height:738px;overflow:hidden"><div class="ln" style="left:7px;top:99px">16</div>
<div class="cl" style="left:54px;top:99px">    //</div>
<div class="ln" style="left:7px;top:117px">17</div>
<div class="cl" style="left:54px;top:117px">    // Phase I. Base &amp; Yard</div>
<div class="ln" style="left:7px;top:135px">18</div>
<div class="cl" style="left:54px;top:135px">    //</div>
<div class="ln" style="left:7px;top:153px">19</div>
<div class="ln" style="left:7px;top:171px">20</div>
<div class="cl" style="left:54px;top:171px">    &quot;kbase&quot;,    1,0, -1,  0,    // starbase</div>
<div class="ln" style="left:7px;top:189px">21</div>
<div class="cl" style="left:54px;top:189px">    &quot;kconst&quot;,   1,0, -1,  0,    // construction ship</div>
<div class="ln" style="left:7px;top:207px">22</div>
<div class="cl" style="left:54px;top:207px">    &quot;kconst&quot;,   1,0, -1,  0,    // second construction ship</div>
<div class="ln" style="left:7px;top:225px">23</div>
<div class="cl" style="left:54px;top:225px">    &quot;korbital&quot;, 1,2, -1,  0,    // metal mine</div>
<div class="ln" style="left:7px;top:243px">24</div>
<div class="cl" style="left:54px;top:243px">    &quot;kresear&quot;,  1,0, -1,  0,    // basic research</div>
<div class="ln" style="left:7px;top:261px">25</div>
<div class="cl" style="left:54px;top:261px">    &quot;kyard&quot;,    1,0, -1,  0,    // basic shipyard</div>
<div class="ln" style="left:7px;top:279px">26</div>
<div class="cl" style="left:54px;top:279px">    &quot;kcolony&quot;,  1,0,  4,  0,    // colony ship</div>
<div class="ln" style="left:7px;top:297px">27</div>
<div class="cl" style="left:54px;top:297px">    &quot;kmining&quot;,  1,1,  1,  0,    // mining station</div>
<div class="ln" style="left:7px;top:315px">28</div>
<div class="cl" style="left:54px;top:315px">    &quot;kfreight&quot;, 2,0, -1,  0,    // mining freighter - two</div>
<div class="cl" style="left:54px;top:333px">    freighters for each station</div>
<div class="ln" style="left:7px;top:351px">29</div>
<div class="cl" style="left:54px;top:351px">    &quot;kscout&quot;,   2,0, -1,  0,    // scout</div>
<div class="ln" style="left:7px;top:369px">30</div>
<div class="cl" style="left:54px;top:369px">    &quot;kturret&quot;,  2,1,  4,  0,    // basic mining defense</div>
<div class="ln" style="left:7px;top:387px">31</div>
<div class="cl" style="left:54px;top:387px">    &quot;kfreight&quot;, 2,0, -1,  0,    // mining freighter - two</div>
<div class="cl" style="left:54px;top:405px">    freighters for each station</div>
<div class="ln" style="left:7px;top:423px">32</div>
<div class="cl" style="left:54px;top:423px">    &quot;kdestroy&quot;, 6,0,  4,  0,    // Bird of Prey</div>
<div class="ln" style="left:7px;top:441px">33</div>
<div class="ln" style="left:7px;top:459px">34</div>
<div class="cl" style="left:54px;top:459px">    //</div>
<div class="ln" style="left:7px;top:477px">35</div>
<div class="cl" style="left:54px;top:477px">    // Phase II. Research</div>
<div class="ln" style="left:7px;top:495px">36</div>
<div class="cl" style="left:54px;top:495px">    //</div>
<div class="ln" style="left:7px;top:513px">37</div>
<div class="cl" style="left:54px;top:513px">    &quot;kcolony&quot;,  1,0,  4,  0,    // colony ship</div>
<div class="ln" style="left:7px;top:531px">38</div>
<div class="cl" style="left:54px;top:531px">    &quot;kcruise1&quot;,     2,0,  4, -2,    // Vorcha</div>
<div class="ln" style="left:7px;top:549px">39</div>
<div class="cl" style="left:54px;top:549px">    &quot;kmining&quot;,  1,3, -1,  0,    // second mining station</div>
<div class="ln" style="left:7px;top:567px">40</div>
<div class="cl" style="left:54px;top:567px">    &quot;kfreight&quot;, 3,0, -1,  0,    // mining freighters</div>
<div class="ln" style="left:7px;top:585px">41</div>
<div class="cl" style="left:54px;top:585px">    &quot;kturret&quot;,  2,2,  4, -3,    // mining defense</div>
<div class="ln" style="left:7px;top:603px">42</div>
<div class="ln" style="left:7px;top:621px">43</div>
<div class="cl" style="left:54px;top:621px">    //</div>
<div class="ln" style="left:7px;top:639px">44</div>
<div class="cl" style="left:54px;top:639px">    // Phase III. Advanced Shipyard</div>
<div class="ln" style="left:7px;top:657px">45</div>
<div class="cl" style="left:54px;top:657px">    //</div>
<div class="ln" style="left:7px;top:675px">46</div>
<div class="cl" style="left:54px;top:675px">    &quot;korbital&quot;, 1,1, -1,  0,    // metal mine</div>
<div class="ln" style="left:7px;top:693px">47</div>
<div class="cl" style="left:54px;top:693px">    &quot;kyard2&quot;,   1,0, -1,  3,    // advanced shipyard</div>
<div class="ln" style="left:7px;top:711px">48</div>
<div class="cl" style="left:54px;top:711px">    &quot;kcruise1&quot;, 2,0, -1, -3,    // Vorcha</div>
<div class="ln" style="left:7px;top:729px">49</div>
<div class="cl" style="left:54px;top:729px">    &quot;kbattle2&quot;, 6,0, -1,  4,    // Qobral</div></div>
<div id="rcode" style="left:0;top:0;width:1341px;height:738px;overflow:hidden"><div class="ln" style="left:577px;top:99px">16</div>
<div class="cl" style="left:624px;top:99px">    //</div>
<div class="ln" style="left:577px;top:117px">17</div>
<div class="cl" style="left:624px;top:117px">    // Phase I. Base &amp; Yard</div>
<div class="ln" style="left:577px;top:135px">18</div>
<div class="cl" style="left:624px;top:135px">    //</div>
<div class="ln" style="left:577px;top:153px">19</div>
<div class="ln" style="left:577px;top:171px">20</div>
<div class="cl" style="left:624px;top:171px">    &quot;kbase&quot;,    1,0, -1,  1,    // starbase</div>
<div class="ln" style="left:577px;top:189px">21</div>
<div class="cl" style="left:624px;top:189px">    &quot;kconst&quot;,   1,0, -1,  0,    // construction ship</div>
<div class="ln" style="left:577px;top:207px">22</div>
<div class="cl" style="left:624px;top:207px">    &quot;kconst&quot;,   1,0, -1,  0,    // second construction ship</div>
<div class="ln" style="left:577px;top:225px">23</div>
<div class="cl" style="left:624px;top:225px">    &quot;kscout&quot;,   1,0, -1,  0,    // scout</div>
<div class="ln" style="left:577px;top:243px">24</div>
<div class="cl" style="left:624px;top:243px">    &quot;kmining&quot;,  1,1, -1,  0,    // mining stations</div>
<div class="ln" style="left:577px;top:261px">25</div>
<div class="cl" style="left:624px;top:261px">    &quot;kturret&quot;,  2,1,  4, -3,    // basic mining defense</div>
<div class="ln" style="left:577px;top:279px">26</div>
<div class="cl" style="left:624px;top:279px">    &quot;korbital&quot;, 1,1, -1,  0,    // build an orbital station</div>
<div class="ln" style="left:577px;top:297px">27</div>
<div class="cl" style="left:624px;top:297px">    &quot;kfreight&quot;, 3,0, -1,  0,    // mining freighter - two freighters for each station</div>
<div class="ln" style="left:577px;top:315px">28</div>
<div class="cl" style="left:624px;top:315px">    &quot;kyard&quot;,    1,0, -1,  0,    // basic shipyard</div>
<div class="ln" style="left:577px;top:333px">29</div>
<div class="cl" style="left:624px;top:333px">    &quot;kdestroy&quot;, 2,0,  4, -2,    // Bird of Prey</div>
<div class="ln" style="left:577px;top:351px">30</div>
<div class="ln" style="left:577px;top:369px">31</div>
<div class="cl" style="left:624px;top:369px">    //</div>
<div class="ln" style="left:577px;top:387px">32</div>
<div class="cl" style="left:624px;top:387px">    // Phase II. Research</div>
<div class="ln" style="left:577px;top:405px">33</div>
<div class="cl" style="left:624px;top:405px">    //</div>
<div class="ln" style="left:577px;top:423px">34</div>
<div class="cl" style="left:624px;top:423px">    &quot;kresear&quot;,  1,0, -1,  2,    // basic research</div>
<div class="ln" style="left:577px;top:441px">35</div>
<div class="cl" style="left:624px;top:441px">    &quot;kcolony&quot;,  1,0,  4,  0,    // colony ship</div>
<div class="ln" style="left:577px;top:459px">36</div>
<div class="cl" style="left:624px;top:459px">    &quot;korbital&quot;, 1,1, -1,  0,    // second orbital station</div>
<div class="ln" style="left:577px;top:477px">37</div>
<div class="cl" style="left:624px;top:477px">    &quot;kcruise1&quot;, 2,0,  4, -2,    // Vorcha</div>
<div class="ln" style="left:577px;top:495px">38</div>
<div class="cl" style="left:624px;top:495px">    &quot;kmining&quot;,  1,2, -1,  0,    // second mining station</div>
<div class="ln" style="left:577px;top:513px">39</div>
<div class="cl" style="left:624px;top:513px">    &quot;kfreight&quot;, 3,0, -1,  0,    // mining freighters</div>
<div class="ln" style="left:577px;top:531px">40</div>
<div class="cl" style="left:624px;top:531px">    &quot;kturret&quot;,  2,2,  4, -3,    // mining defense</div>
<div class="ln" style="left:577px;top:549px">41</div>
<div class="ln" style="left:577px;top:567px">42</div>
<div class="cl" style="left:624px;top:567px">    &quot;kcruise1&quot;, 2,0,  2, -2,    // Vorcha</div>
<div class="ln" style="left:577px;top:585px">43</div>
<div class="cl" style="left:624px;top:585px">    &quot;klipod2&quot;,  1,0, -1,  0,    // Poleron Torpedo (Vorcha)</div>
<div class="ln" style="left:577px;top:603px">44</div>
<div class="cl" style="left:624px;top:603px">    &quot;kcruise2&quot;, 2,0,  2, -2,    // Suqjagh</div>
<div class="ln" style="left:577px;top:621px">45</div>
<div class="cl" style="left:624px;top:621px">    &quot;klipod4&quot;,  1,0, -1,  0,    // Gravity Mines ( Bird Of Prey)</div>
<div class="ln" style="left:577px;top:639px">46</div>
<div class="ln" style="left:577px;top:657px">47</div>
<div class="cl" style="left:624px;top:657px">    &quot;kcruise1&quot;, 2,0, -1, -3,    // Vorcha</div>
<div class="ln" style="left:577px;top:675px">48</div>
<div class="cl" style="left:624px;top:675px">    &quot;kcruise2&quot;, 2,0, -1, -3,    // Suqjagh</div>
<div class="ln" style="left:577px;top:693px">49</div>
<div class="cl" style="left:624px;top:693px">    &quot;klipod5&quot;,  1,0, -1,  0,    // Tachyon Detection Grid (Scout)</div>
<div class="ln" style="left:577px;top:711px">50</div>
<div class="ln" style="left:577px;top:729px">51</div>
<div class="cl" style="left:624px;top:729px">    &quot;ktrading&quot;, 1,0, -1,  0,    // first trading station</div></div>
<div style="left:0;top:743px;width:562px;height:3px;background:linear-gradient(#6a6a6a,#5e5e5e 66%,#9a9a9a)"></div><div style="left:571px;top:743px;width:795px;height:3px;background:linear-gradient(#6a6a6a,#5e5e5e 66%,#9a9a9a)"></div><div style="left:562px;top:728px;width:9px;height:17px;background:#f2f2f2"></div><svg style="left:566px;top:734px" width="5" height="8" viewBox="0 0 5 8"><path d="M0 0V8L5 4Z" fill="#000"/></svg>
<div id="status"><div class="st" style="left:2px">Normal text file</div><div class="st" style="left:660px">length : 4505</div><div class="st" style="left:739px">lines : 138</div><div class="st" style="left:860px">Ln : 50</div><div class="st" style="left:906px">Col : 1</div><div class="st" style="left:951px">Sel : 0</div><div class="st" style="left:1090px">Dos\Windows</div><div class="st" style="left:1200px">ANSI</div><div class="st" style="left:1320px">INS</div><div class="sep" style="left:655px"></div><div class="sep" style="left:855px"></div><div class="sep" style="left:1085px"></div><div class="sep" style="left:1195px"></div><div class="sep" style="left:1315px"></div><div class="sep" style="left:1345px"></div></div>
<div style="left:0;top:765px;width:1366px;height:2px;background:linear-gradient(#5a5a5a,#2e2e2e)"></div><div style="left:0;top:92px;width:1px;height:651px;background:#fcfcfc"></div><div style="left:1px;top:92px;width:1px;height:651px;background:#e6e6e6"></div>
<div style="left:0;top:767px;width:1366px;height:1px;background:#e8eaee"></div><div style="left:0;top:767px;width:60px;height:1px;background:#bcd0e6"></div><div style="left:60px;top:767px;width:58px;height:1px;background:#fafafa"></div><div style="left:122px;top:767px;width:58px;height:1px;background:#fafafa"></div><div style="left:183px;top:767px;width:58px;height:1px;background:#fafafa"></div><div style="left:244px;top:767px;width:58px;height:1px;background:#fafafa"></div><div style="left:306px;top:767px;width:58px;height:1px;background:#fafafa"></div>
</body></html>
